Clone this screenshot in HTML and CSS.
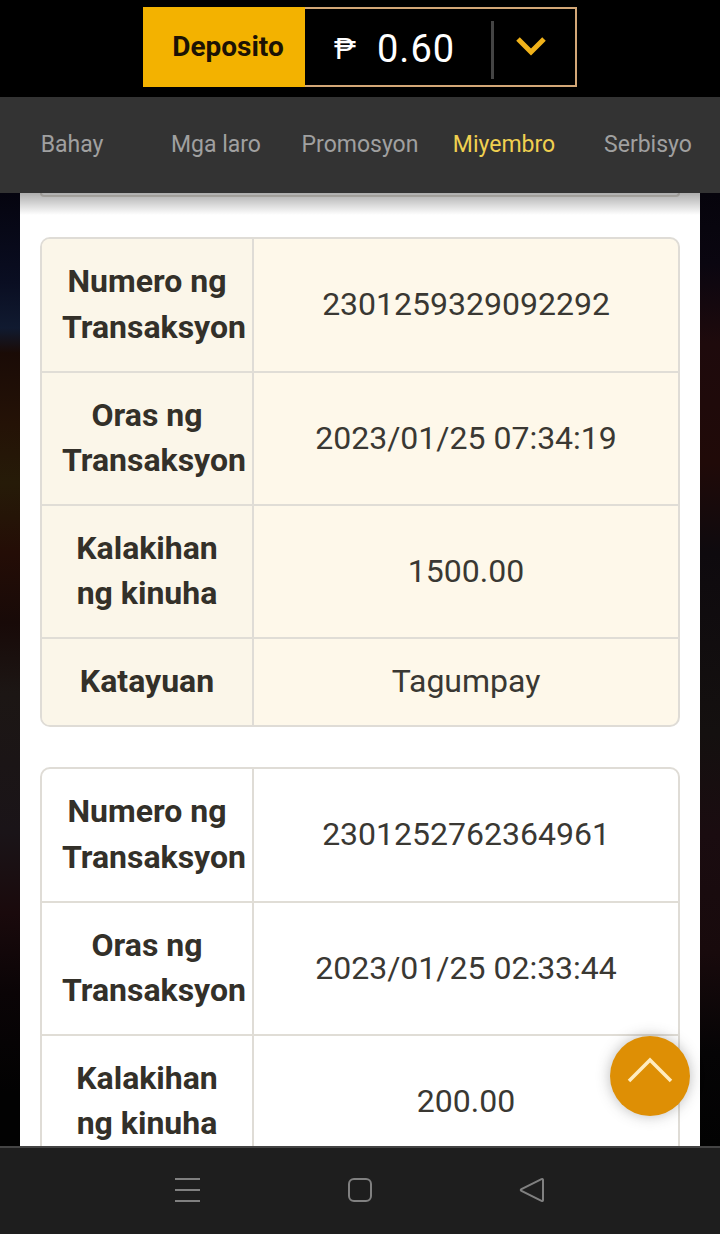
FILE: index.html
```html
<!DOCTYPE html>
<html lang="en">
<head>
    <meta charset="UTF-8">
    <meta name="viewport" content="width=device-width, initial-scale=1.0">
    <title>Miyembro</title>
    <link rel="stylesheet" href="styles.css">
</head>
<body>
    <div class="screen">
        <header class="topbar">
            <div class="wallet">
                <a class="deposit" href="#">Deposito</a>
                <div class="balance">
                    <span class="peso">₱</span>
                    <span class="amount">0.60</span>
                </div>
                <div class="toggle">
                    <svg width="32" height="20" viewBox="0 0 32 20"><path d="M3 3 L16 16 L29 3" fill="none" stroke="#f0b21a" stroke-width="5"/></svg>
                </div>
            </div>
        </header>
        <nav class="menu">
            <a href="#">Bahay</a>
            <a href="#">Mga laro</a>
            <a href="#">Promosyon</a>
            <a href="#" class="active">Miyembro</a>
            <a href="#">Serbisyo</a>
        </nav>
        <main class="content">
            <div class="panel">
                <div class="card card-stub"></div>
                <div class="card cream">
                    <div class="row"><div class="label"><span>Numero ng Transaksyon</span></div><div class="value">2301259329092292</div></div>
                    <div class="row"><div class="label"><span>Oras ng Transaksyon</span></div><div class="value">2023/01/25 07:34:19</div></div>
                    <div class="row"><div class="label"><span>Kalakihan ng kinuha</span></div><div class="value">1500.00</div></div>
                    <div class="row short"><div class="label"><span>Katayuan</span></div><div class="value">Tagumpay</div></div>
                </div>
                <div class="card">
                    <div class="row"><div class="label"><span>Numero ng Transaksyon</span></div><div class="value">2301252762364961</div></div>
                    <div class="row"><div class="label"><span>Oras ng Transaksyon</span></div><div class="value">2023/01/25 02:33:44</div></div>
                    <div class="row"><div class="label"><span>Kalakihan ng kinuha</span></div><div class="value">200.00</div></div>
                </div>
            </div>
            <div class="shade"></div>
            <a class="to-top" href="#">
                <svg width="48" height="28" viewBox="0 0 48 28"><path d="M3 25 L24 4 L45 25" fill="none" stroke="#ffecc0" stroke-width="3.5"/></svg>
            </a>
        </main>
        <footer class="sysbar">
            <svg width="26" height="26" viewBox="0 0 26 26"><path d="M0 2 H25 M0 13 H25 M0 24 H25" stroke="#808080" stroke-width="2"/></svg>
            <svg width="26" height="26" viewBox="0 0 26 26"><rect x="2" y="2" width="22" height="22" rx="5" fill="none" stroke="#808080" stroke-width="2"/></svg>
            <svg width="26" height="26" viewBox="0 0 26 26"><path d="M24 3 Q24 1.500 22.500 2.200 L2.500 12 Q1 13 2.500 14 L22.500 23.800 Q24 24.500 24 23 Z" fill="none" stroke="#808080" stroke-width="2"/></svg>
        </footer>
    </div>
</body>
</html>
```

FILE: styles.css
```css
html, body {
    margin: 0;
    padding: 0;
    background: #000;
}
a {
    text-decoration: none;
    color: inherit;
}
.screen {
    width: 720px;
    height: 1234px;
    display: flex;
    flex-direction: column;
    overflow: hidden;
    font-family: Roboto, "Liberation Sans", sans-serif;
}

/* top wallet bar */
.topbar {
    height: 97px;
    flex: none;
    background: #000;
    display: flex;
    justify-content: center;
    padding-top: 7px;
    box-sizing: border-box;
}
.wallet {
    width: 434px;
    height: 80px;
    box-sizing: border-box;
    border: 2px solid #d3a777;
    display: flex;
    align-items: stretch;
    background: #000;
}
.deposit {
    width: 162px;
    margin: -2px 0 -2px -2px;
    padding: 0 0 1px 8px;
    box-sizing: border-box;
    background: #f3b200;
    color: #1c1204;
    font-size: 28px;
    font-weight: 700;
    display: flex;
    align-items: center;
    justify-content: center;
}
.balance {
    flex: 1;
    display: flex;
    align-items: center;
    color: #fff;
    padding: 3px 0 0 29px;
}
.peso {
    font-size: 30px;
    width: 43px;
}
.amount {
    font-size: 38px;
    letter-spacing: 1px;
}
.toggle {
    width: 84px;
    padding: 0 4px 2px 0;
    box-sizing: border-box;
    position: relative;
    display: flex;
    align-items: center;
    justify-content: center;
}
.toggle::before {
    content: "";
    position: absolute;
    left: 0;
    top: 12px;
    width: 3px;
    height: 58px;
    background: #444;
}

/* main menu */
.menu {
    height: 96px;
    flex: none;
    background: #333;
    display: grid;
    grid-template-columns: repeat(5, 144px);
    align-items: center;
    justify-items: center;
    color: #a0a0a0;
    font-size: 23px;
    padding-bottom: 2px;
    box-sizing: border-box;
    position: relative;
    z-index: 1;
}
.menu .active {
    color: #f0d050;
}

/* content, the page picture shows only at the two sides */
.content {
    flex: 1;
    position: relative;
    overflow: hidden;
    background:
        linear-gradient(#05040f 0, #0a0e22 90px, #101a30 135px, #1a0b06 160px, #241206 230px, #261b08 290px, #240d06 360px, #180a08 430px, #1c1614 500px, #1a1418 640px, #1a0a0c 720px, #0a0406 800px, #020202 900px) left top / 20px 100% no-repeat,
        linear-gradient(#06040c 0, #0a0610 70px, #1e0a0c 150px, #200a08 270px, #0e0a0e 360px, #14100f 540px, #1a0c10 640px, #180a0c 760px, #050405 860px, #020202 953px) right top / 20px 100% no-repeat,
        #000;
}
.panel {
    margin: 0 20px;
    background: #fff;
    padding: 0 20px;
    height: 100%;
}
.shade {
    position: absolute;
    left: 20px;
    right: 20px;
    top: 0;
    height: 22px;
    background: linear-gradient(rgba(0, 0, 0, 0.32), rgba(0, 0, 0, 0));
}
.card {
    border: 2px solid #dfdcd6;
    border-radius: 10px;
    margin-bottom: 40px;
    overflow: hidden;
    background: #fff;
}
.card-stub {
    height: 4px;
    border-top: 0;
    border-radius: 0 0 10px 10px;
    box-sizing: border-box;
}
.cream {
    background: #fef8ea;
}
.cream .label {
    background: #fbf6e9;
}
.row {
    display: grid;
    grid-template-columns: 212px 1fr;
    height: 133px;
    border-bottom: 2px solid #e0ddd6;
    box-sizing: border-box;
}
.row:first-child {
    height: 134px;
}
.row.short {
    height: 86px;
    border-bottom: 0;
}
.label {
    border-right: 2px solid #dfdcd6;
    color: #333029;
    font-size: 32px;
    font-weight: 700;
    line-height: 45.500px;
    text-align: center;
    display: flex;
    align-items: center;
    padding: 0 20px 1px;
}
.label span {
    flex: 1;
    min-width: 0;
}
.value {
    color: #3a3833;
    font-size: 32px;
    padding-bottom: 2px;
    display: flex;
    align-items: center;
    justify-content: center;
}

/* scroll to top button */
.to-top {
    position: absolute;
    left: 610px;
    top: 843px;
    width: 80px;
    height: 80px;
    border-radius: 50%;
    background: #de8f05;
    box-shadow: 0 0 14px rgba(60, 60, 60, 0.35);
    display: flex;
    justify-content: center;
    padding-top: 20px;
    box-sizing: border-box;
}

/* phone navigation bar */
.sysbar {
    height: 88px;
    flex: none;
    box-sizing: border-box;
    background: #1e1e1e;
    border-top: 2px solid #444;
    display: flex;
    justify-content: center;
    gap: 146px;
    align-items: center;
    padding-bottom: 2px;
    position: relative;
}
```
